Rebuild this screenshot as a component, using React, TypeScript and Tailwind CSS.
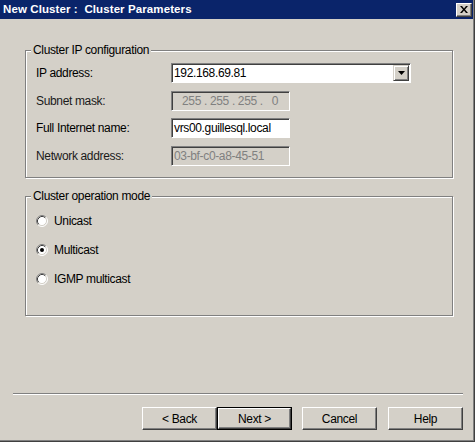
import React from 'react';

function Radio({ checked }: { checked?: boolean }) {
  return (
    <svg width="12" height="12" viewBox="0 0 12 12" className="shrink-0">
      <circle cx="6" cy="6" r="5" fill="#fff" />
      <path d="M2.11 9.89 A5.5 5.5 0 0 1 9.89 2.11" fill="none" stroke="#808080" strokeWidth="1" />
      <path d="M9.89 2.11 A5.5 5.5 0 0 1 2.11 9.89" fill="none" stroke="#ffffff" strokeWidth="1" />
      <path d="M2.82 9.18 A4.5 4.5 0 0 1 9.18 2.82" fill="none" stroke="#404040" strokeWidth="1" />
      <path d="M9.18 2.82 A4.5 4.5 0 0 1 2.82 9.18" fill="none" stroke="#d4d0c8" strokeWidth="1" />
      {checked && <circle cx="6" cy="6" r="2" fill="#000" />}
    </svg>
  );
}

function Button({ label, isDefault }: { label: string; isDefault?: boolean }) {
  if (isDefault) {
    return (
      <div className="w-[75px] h-[23px] border border-black">
        <div className="w-full h-full flex items-center justify-center bg-[#d4d0c8] border-t border-l border-white border-r border-b border-r-[#404040] border-b-[#404040] shadow-[inset_-1px_-1px_0_#808080] text-black">
          {label}
        </div>
      </div>
    );
  }
  return (
    <div className="w-[75px] h-[23px] flex items-center justify-center bg-[#d4d0c8] border-t border-l border-white border-r border-b border-r-[#404040] border-b-[#404040] shadow-[inset_-1px_-1px_0_#808080] text-black">
      {label}
    </div>
  );
}

function Field({ children, width, disabled }: { children: React.ReactNode; width: string; disabled?: boolean }) {
  return (
    <div
      className={`${width} h-[20px] flex items-center pl-[2px] border-t border-l border-[#808080] border-r border-b border-r-white border-b-white shadow-[inset_1px_1px_0_#404040] ${
        disabled ? 'bg-[#d4d0c8] text-[#808080]' : 'bg-white text-black'
      }`}
    >
      {children}
    </div>
  );
}

function GroupBox({ title, height, children }: { title: string; height: string; children: React.ReactNode }) {
  return (
    <div className={`relative ml-[25px] w-[428px] ${height} border border-[#808080] shadow-[inset_1px_1px_0_#fff,1px_1px_0_#fff]`}>
      <div className="absolute left-[5px] top-[-8px] px-[2px] bg-[#d4d0c8] leading-[14px] text-black">
        {title}
      </div>
      {children}
    </div>
  );
}

export default function App() {
  return (
    <div className="w-[475px] h-[442px] border-r border-b border-[#404040] bg-[#d4d0c8] text-[12px] tracking-[-0.35px] font-['Liberation_Sans',Arial,sans-serif]">
      <div className="w-full h-full border-r border-b border-[#808080] flex flex-col">
        {/* title bar */}
        <div className="h-[19px] bg-[#0a246a] flex items-center justify-between pl-[3px] pr-[1px]">
          <span className="text-white font-bold text-[11.5px] tracking-[0.1px]">
            New Cluster :&nbsp; Cluster Parameters
          </span>
          <div className="w-[16px] h-[14px] flex items-center justify-center bg-[#d4d0c8] border-t border-l border-white border-r border-b border-r-[#404040] border-b-[#404040] shadow-[inset_-1px_-1px_0_#808080]">
            <svg width="8" height="7" viewBox="0 0 8 7">
              <path d="M0 0h2l2 2.5L6 0h2L5 3.5 8 7H6L4 4.5 2 7H0l3-3.5z" fill="#000" />
            </svg>
          </div>
        </div>

        <div className="mt-[31px]">
          <GroupBox title="Cluster IP configuration" height="h-[128px]">
            <div className="pl-[10px] pt-[12px] flex flex-col">
              <div className="flex items-center h-[20px]">
                <span className="w-[135px] text-black">IP address:</span>
                <div className="w-[240px] h-[20px] flex items-center border-t border-l border-[#808080] border-r border-b border-r-white border-b-white shadow-[inset_1px_1px_0_#404040] bg-white">
                  <span className="flex-1 pl-[2px] text-black">192.168.69.81</span>
                  <div className="w-[16px] h-[16px] mr-[1px] flex items-center justify-center bg-[#d4d0c8] border-t border-l border-[#d4d0c8] border-r border-b border-r-[#404040] border-b-[#404040] shadow-[inset_1px_1px_0_#fff,inset_-1px_-1px_0_#808080]">
                    <svg width="7" height="4" viewBox="0 0 7 4">
                      <path d="M0 0h7L3.5 4z" fill="#000" />
                    </svg>
                  </div>
                </div>
              </div>
              <div className="flex items-center h-[20px] mt-[8px]">
                <span className="w-[135px] text-[#1a1a1a]">Subnet mask:</span>
                <Field width="w-[119px]" disabled>
                  <span className="pl-[8px] whitespace-pre">255 . 255 . 255 .   0</span>
                </Field>
              </div>
              <div className="flex items-center h-[20px] mt-[7px]">
                <span className="w-[135px] text-black">Full Internet name:</span>
                <Field width="w-[119px]">vrs00.guillesql.local</Field>
              </div>
              <div className="flex items-center h-[20px] mt-[8px]">
                <span className="w-[135px] text-[#1a1a1a]">Network address:</span>
                <Field width="w-[119px]" disabled>03-bf-c0-a8-45-51</Field>
              </div>
            </div>
          </GroupBox>
        </div>

        <div className="mt-[18px]">
          <GroupBox title="Cluster operation mode" height="h-[120px]">
            <div className="pl-[10px] pt-[17px] flex flex-col gap-[16px]">
              <div className="flex items-center h-[13px] gap-[6px]">
                <Radio />
                <span className="text-black">Unicast</span>
              </div>
              <div className="flex items-center h-[13px] gap-[6px]">
                <Radio checked />
                <span className="text-black">Multicast</span>
              </div>
              <div className="flex items-center h-[13px] gap-[6px]">
                <Radio />
                <span className="text-black">IGMP multicast</span>
              </div>
            </div>
          </GroupBox>
        </div>

        <div className="mt-[77px] ml-[13px] w-[450px] h-[2px] border-t border-[#808080] border-b border-b-white" />

        <div className="mt-[12px] ml-[142px] flex">
          <Button label="< Back" />
          <Button label="Next >" isDefault />
          <div className="ml-[10px]">
            <Button label="Cancel" />
          </div>
          <div className="ml-[11px]">
            <Button label="Help" />
          </div>
        </div>
      </div>
    </div>
  );
}
